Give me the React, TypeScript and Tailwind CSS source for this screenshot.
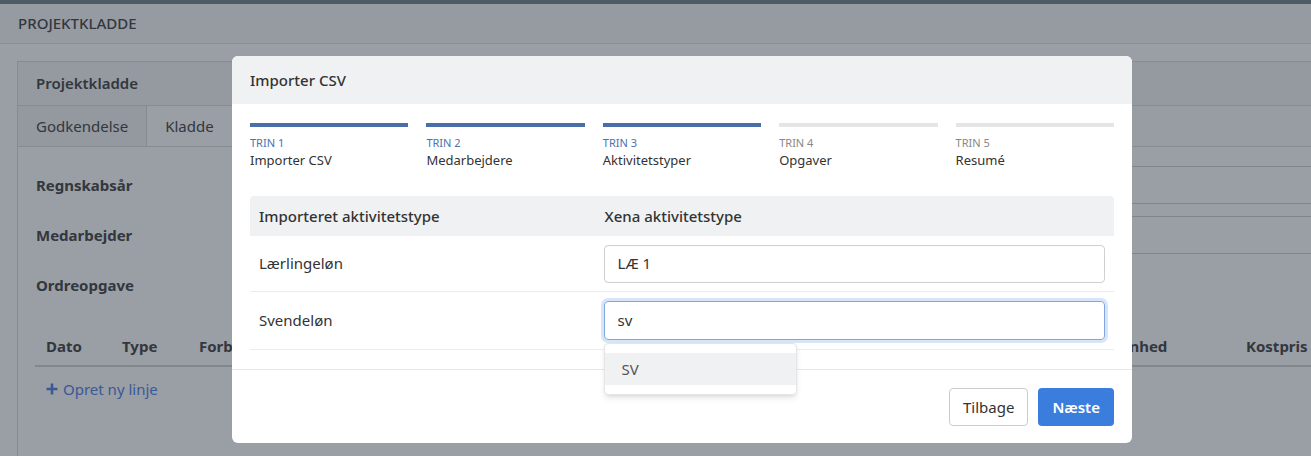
import React from 'react';

// Trin i guiden
interface Step {
  label: string;
  title: string;
  done: boolean;
}

const steps: Step[] = [
  { label: 'TRIN 1', title: 'Importer CSV', done: true },
  { label: 'TRIN 2', title: 'Medarbejdere', done: true },
  { label: 'TRIN 3', title: 'Aktivitetstyper', done: true },
  { label: 'TRIN 4', title: 'Opgaver', done: false },
  { label: 'TRIN 5', title: 'Resumé', done: false },
];

const font = { fontFamily: '"Noto Sans", "Open Sans", Arial, sans-serif' };

// Baggrundssiden bag modalen
const BackgroundPage: React.FC = () => (
  <div className="w-full h-full bg-white text-[#444]">
    <div className="h-[4px] bg-[#71878c]" />
    <div className="h-[40px] bg-[#f8f9fa] border-b border-[#e3e3e3] px-[18px] flex items-center text-[15px] font-medium text-[#444]">
      PROJEKTKLADDE
    </div>
    <div className="pt-[17px] pl-[17px]">
      <div className="w-[1320px] border border-[#dcdcdc] bg-white h-[420px]">
        <div className="h-[44px] bg-[#f6f6f6] border-b border-[#dcdcdc] px-[18px] flex items-center text-[15px] font-semibold">
          Projektkladde
        </div>
        <div className="h-[41px] flex border-b border-[#dcdcdc] text-[15px] bg-[#fbfbfb]">
          <div className="px-[18px] flex items-center border-r border-[#dcdcdc] bg-[#f4f4f4]">Godkendelse</div>
          <div className="px-[18px] flex items-center border-r border-[#dcdcdc] bg-white">Kladde</div>
          <div className="px-[18px] flex items-center">Import</div>
        </div>
        <div className="pt-[19px] flex flex-col gap-[12px] pl-[18px] pr-[10px]">
          {['Regnskabsår', 'Medarbejder', 'Ordreopgave'].map((label, i) => (
            <div key={label} className="flex items-center h-[38px]">
              <div className="w-[220px] text-[15px] font-bold">{label}</div>
              {i < 2 && <div className="flex-1 h-[38px] border border-[#d0d0d0] rounded" />}
            </div>
          ))}
        </div>
        <div className="mt-[23px] ml-[17px] mr-[10px]">
          <div className="h-[40px] flex items-center border-b-2 border-[#d6d6d6] text-[15px] font-bold pl-[11px]">
            <div className="w-[76px]">Dato</div>
            <div className="w-[77px]">Type</div>
            <div className="flex-1">Forbrug</div>
            <div className="w-[125px]">Enhed</div>
            <div className="w-[80px]">Kostpris</div>
          </div>
          <div className="h-[44px] flex items-center pl-[11px] text-[15px] text-[#4f83e6]">
            <svg width="12" height="12" viewBox="0 0 12 12" className="mr-[5px]">
              <path d="M6 0.5v11M0.5 6h11" stroke="currentColor" strokeWidth="2.6" />
            </svg>
            Opret ny linje
          </div>
        </div>
      </div>
    </div>
  </div>
);

const App: React.FC = () => {
  return (
    <div className="relative w-[1311px] h-[456px] overflow-hidden" style={font}>
      <BackgroundPage />
      {/* mørk overlay */}
      <div className="absolute inset-0 bg-[#1f2937]/45" />

      {/* Modal */}
      <div className="absolute left-[232px] top-[56px] w-[900px] bg-white rounded-[6px] overflow-visible text-[#333]">
        <div className="h-[48px] bg-[#f0f1f3] rounded-t-[6px] px-[18px] flex items-center text-[15px] font-medium">
          Importer CSV
        </div>

        <div className="px-[18px] pt-[19px] pb-[19px]">
          {/* Stepper */}
          <div className="grid grid-cols-5 gap-[18px]">
            {steps.map((s) => (
              <div key={s.label}>
                <div className={`h-[4px] ${s.done ? 'bg-[#4a6fa8]' : 'bg-[#e5e5e5]'}`} />
                <div className={`mt-[9px] text-[11px] leading-[14px] ${s.done ? 'text-[#4a72b0]' : 'text-[#888]'}`}>
                  {s.label}
                </div>
                <div className="text-[13px] leading-[20px] text-[#333]">{s.title}</div>
              </div>
            ))}
          </div>

          {/* Tabel */}
          <div className="mt-[26px]">
            <div className="h-[40px] bg-[#f0f1f3] rounded-t-[4px] flex items-center text-[15px] font-medium">
              <div className="w-[40%] px-[9px]">Importeret aktivitetstype</div>
              <div className="flex-1 px-[9px]">Xena aktivitetstype</div>
            </div>
            <div className="h-[56px] flex items-center border-b border-[#ececec] text-[15px]">
              <div className="w-[40%] px-[9px]">Lærlingeløn</div>
              <div className="flex-1 pl-[8px] pr-[9px]">
                <div className="h-[38px] border border-[#cfcfcf] rounded-[4px] flex items-center px-[13px]">LÆ 1</div>
              </div>
            </div>
            <div className="h-[58px] flex items-center border-b border-[#ececec] text-[15px]">
              <div className="w-[40%] px-[9px]">Svendeløn</div>
              <div className="flex-1 pl-[8px] pr-[9px] relative">
                <div className="h-[39px] border border-[#7fa6de] ring-[3px] ring-[#3b7ddd]/20 rounded-[4px] flex items-center px-[13px]">
                  sv
                </div>
                {/* forslag */}
                <div className="absolute left-[8px] top-[42px] w-[193px] bg-white rounded-[4px] border border-[#e6e6e6] shadow-md py-[9px] z-10">
                  <div className="h-[32px] bg-[#f0f1f3] flex items-center pl-[17px] text-[15px] text-[#555]">SV</div>
                </div>
              </div>
            </div>
          </div>
        </div>

        <div className="border-t border-[#e8e8e8] px-[18px] pt-[18px] pb-[17px] flex justify-end gap-[10px]">
          <button className="h-[38px] px-[13px] border border-[#cccccc] rounded-[4px] bg-white text-[15px] text-[#333]">
            Tilbage
          </button>
          <button className="h-[38px] px-[14px] rounded-[4px] bg-[#3b7ddd] text-[15px] font-semibold text-white">
            Næste
          </button>
        </div>
      </div>
    </div>
  );
};

export default App;
